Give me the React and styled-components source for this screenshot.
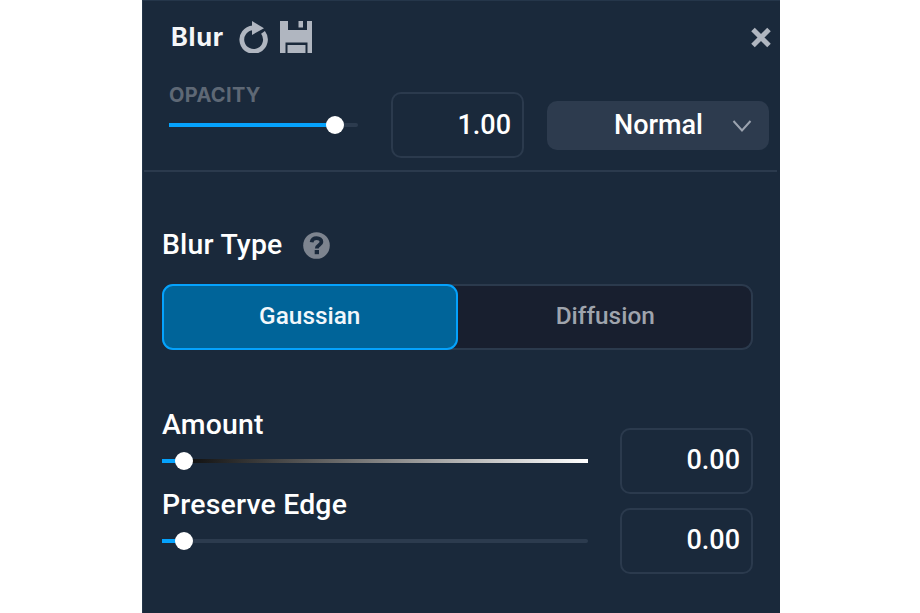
import React from "react";
import styled, { createGlobalStyle } from "styled-components";

const GlobalStyle = createGlobalStyle`
  * { box-sizing: border-box; }
  body { margin: 0; background: #fff; font-family: Roboto, sans-serif; }
`;

const Panel = styled.main`
  width: 638px;
  height: 613px;
  margin-left: 142px;
  background: #1a293b;
  border: solid #25364a;
  border-width: 1px 0 0 1px;
  color: #fff;
  overflow: hidden;
`;

const Header = styled.header`
  height: 171px;
  margin: 0 3px 0 1px;
  border-bottom: 2px solid #2b3a4d;
`;

const TitleRow = styled.div`
  display: flex;
  align-items: flex-start;
  height: 73px;
  padding: 20px 5px 0 27px;
`;

const Title = styled.h1`
  margin: 0 15px 0 0;
  width: 53px;
  font: 700 25.5px/32px Inter, sans-serif;
  letter-spacing: 0.7px;
  color: #f4f6f8;
  white-space: nowrap;
`;

const IconButton = styled.button`
  display: block;
  padding: 0;
  border: 0;
  background: none;
  color: #b0b6c0;
  height: 32px;
  margin-left: ${(p) => p.$gap || "0"};
  svg { display: block; }
`;

const ControlRow = styled.div`
  display: flex;
  align-items: flex-start;
  padding: 0 6px 0 25px;
`;

const OpacityGroup = styled.div`
  width: 189px;
  height: 62px;
  margin: 9px 33px 0 0;
`;

const OpacityLabel = styled.div`
  font: 700 20px/24px Inter, sans-serif;
  letter-spacing: 0.35px;
  color: #5e6875;
  white-space: nowrap;
  height: 40px;
`;

const Track = styled.div`
  position: relative;
  height: 4px;
  border-radius: ${(p) => (p.$fill ? "0" : "0 2px 2px 0")};
  background: ${(p) => p.$fill || "#2c3b4e"};
`;

const Filled = styled.div`
  height: 4px;
  background: #05a2fc;
`;

const Thumb = styled.div`
  position: absolute;
  top: -7px;
  width: 18px;
  height: 18px;
  margin-left: -9px;
  border-radius: 50%;
  background: #fff;
`;

const NumberBox = styled.div`
  flex: none;
  width: 133px;
  height: 66px;
  margin-top: ${(p) => p.$top};
  padding: 0 11px 0 0;
  border: 2px solid #2b3a4d;
  border-radius: 10px;
  font-size: 27px;
  font-weight: 500;
  line-height: ${(p) => p.$line || "61px"};
  text-align: right;
`;

const BlendSelect = styled.div`
  display: flex;
  align-items: center;
  justify-content: space-between;
  width: 222px;
  height: 49px;
  margin: 27px 0 0 23px;
  padding: 0 17px 2px 67px;
  border-radius: 10px;
  background: #2d3b4e;
  font-size: 27px;
  font-weight: 500;
`;

const Body = styled.section`
  padding: 53px 27px 0 19px;
`;

const Heading = styled.div`
  display: flex;
  align-items: center;
  height: 39px;
  margin-bottom: 20px;
`;

const Label = styled.div`
  font-size: 28.4px;
  font-weight: 500;
  line-height: 36px;
  letter-spacing: 0.2px;
  white-space: nowrap;
  margin-right: 20px;
`;

const Segments = styled.div`
  display: flex;
  height: 66px;
  margin-bottom: 57px;
  border-radius: 11px;
  background: #181f2f;
  box-shadow: inset 0 0 0 2px #2b3a4d;
`;

const Segment = styled.button`
  width: 50%;
  padding: 0 0 4px;
  border: 2px solid ${(p) => (p.$active ? "#05a2fc" : "transparent")};
  border-radius: 11px;
  background: ${(p) => (p.$active ? "#006499" : "transparent")};
  color: ${(p) => (p.$active ? "#f2f7fb" : "#9fa4ad")};
  font: 500 24.4px Roboto, sans-serif;
`;

const SliderRow = styled.div`
  display: flex;
  justify-content: space-between;
  height: 80px;
`;

const SliderColumn = styled.div`
  width: 426px;
`;

const SliderLabel = styled(Label)`
  height: 52px;
`;

const Slider = ({ value, fill }) => (
  <Track $fill={fill}>
    <Filled style={{ width: `${value}%` }} />
    <Thumb style={{ left: `${value}%` }} />
  </Track>
);

const ResetIcon = () => (
  <svg width="30" height="32" viewBox="0 0 30 32">
    <path d="M24 11.4A11.8 11.8 0 1 1 14 6.8" fill="none" stroke="currentColor" strokeWidth="4.8" />
    <path d="M13 0L25 7.2L13 14Z" fill="currentColor" />
  </svg>
);

const SaveIcon = () => (
  <svg width="32" height="32" viewBox="0 0 32 32" fill="currentColor">
    <path d="M0 0H8V9H27V0H32V32H27.5V21.5H5.5V32H0Z" />
    <path d="M18.5 0H23V6.5H18.5ZM7.5 24H25.5V32H7.5Z" />
  </svg>
);

const CloseIcon = () => (
  <svg width="22" height="32" viewBox="0 0 22 32">
    <path d="M3 8.5L19 24.5M19 8.5L3 24.5" stroke="currentColor" strokeWidth="5" />
  </svg>
);

const Chevron = () => (
  <svg width="20" height="14" viewBox="0 0 20 14">
    <path d="M1.5 3L10 12.5L18.5 3" fill="none" stroke="#9ba3af" strokeWidth="2" />
  </svg>
);

const HelpIcon = () => (
  <svg width="27" height="28" viewBox="0 -1 27 28">
    <circle cx="13.5" cy="13.5" r="13.3" fill="#7d848f" />
    <path d="M8.6 10.3C9 7.5 11 6.2 13.7 6.2C16.6 6.2 18.4 7.8 18.4 10C18.4 13.2 13.8 12.8 13.8 16.5" fill="none" stroke="#1a293b" strokeWidth="3.8" />
    <rect x="11.7" y="18" width="4.3" height="4.2" fill="#1a293b" />
  </svg>
);

export default function App() {
  return (
    <>
      <GlobalStyle />
      <Panel>
        <Header>
          <TitleRow>
            <Title>Blur</Title>
            <IconButton aria-label="Reset"><ResetIcon /></IconButton>
            <IconButton aria-label="Save" $gap="11px"><SaveIcon /></IconButton>
            <IconButton aria-label="Close" $gap="auto"><CloseIcon /></IconButton>
          </TitleRow>
          <ControlRow>
            <OpacityGroup>
              <OpacityLabel>OPACITY</OpacityLabel>
              <Slider value={88} />
            </OpacityGroup>
            <NumberBox $top="18px" $line="62px">1.00</NumberBox>
            <BlendSelect>Normal<Chevron /></BlendSelect>
          </ControlRow>
        </Header>
        <Body>
          <Heading><Label>Blur Type</Label><HelpIcon /></Heading>
          <Segments>
            <Segment $active>Gaussian</Segment>
            <Segment>Diffusion</Segment>
          </Segments>
          <SliderRow>
            <SliderColumn>
              <SliderLabel>Amount</SliderLabel>
              <Slider value={5.2} fill="linear-gradient(90deg, #000, #fff)" />
            </SliderColumn>
            <NumberBox $top="21px">0.00</NumberBox>
          </SliderRow>
          <SliderRow>
            <SliderColumn>
              <SliderLabel>Preserve Edge</SliderLabel>
              <Slider value={5.2} />
            </SliderColumn>
            <NumberBox $top="21px">0.00</NumberBox>
          </SliderRow>
        </Body>
      </Panel>
    </>
  );
}
